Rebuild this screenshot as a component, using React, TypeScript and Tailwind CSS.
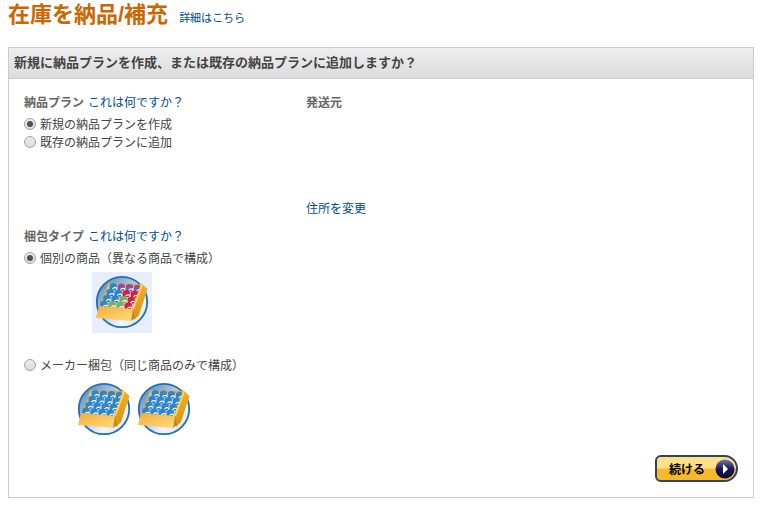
import React from "react";

const BLUE = "#2f86c6";
const PURPLE = "#8a4bab";
const RED = "#d2213f";
const GREEN = "#83ad5c";

const MIXED = [
  [BLUE, PURPLE, PURPLE, PURPLE],
  [BLUE, BLUE, RED, RED],
  [BLUE, BLUE, GREEN, RED],
  [BLUE, GREEN, GREEN, RED],
];
const SAME = [0, 1, 2, 3].map(() => [BLUE, BLUE, BLUE, BLUE]);

function BoxIcon({ id, items }: { id: string; items: string[][] }) {
  return (
    <svg viewBox="0 0 60 60" className="size-[60px]" aria-hidden="true">
      <defs>
        <linearGradient id={id + "sky"} x1="0" y1="0" x2="1" y2="1">
          <stop offset="0" stopColor="#3f7dbb" />
          <stop offset="0.35" stopColor="#9dbce0" />
          <stop offset="0.7" stopColor="#f0f6fd" />
          <stop offset="1" stopColor="#c5def2" />
        </linearGradient>
        <linearGradient id={id + "front"} x1="0" y1="0" x2="1" y2="1">
          <stop offset="0" stopColor="#f3ac38" />
          <stop offset="1" stopColor="#ffdd7d" />
        </linearGradient>
        <linearGradient id={id + "side"} x1="0" y1="0" x2="0" y2="1">
          <stop offset="0" stopColor="#f0b02c" />
          <stop offset="1" stopColor="#d99412" />
        </linearGradient>
      </defs>
      <circle cx="30" cy="30" r="25.2" fill={`url(#${id}sky)`} stroke="#2470ad" strokeWidth="1.8" />
      <path d="M16 11 L50 12 L41 38 L7 35Z" fill="#e5a52d" />
      <path d="M17 12 L49 15 L40 38 L9 35Z" fill="#b9d2ea" />
      {items.map((row, r) =>
        row.map((color, c) => (
          <g key={`${r}-${c}`} transform={`translate(${17.6 - r * 3.1 + c * 8.1} ${11 + r * 5.9 + c * 0.6})`}>
            <path d="M0 1.6 Q3.6 -1.8 7.2 1.6 V7 H0Z" fill={color} />
            <path d="M2.6 5.4 Q5 3.4 7.2 4.4 V6.8 H6.4 V5.4 Q4.6 5 2.6 6.6Z" fill="#fff" />
          </g>
        )),
      )}
      <path d="M49 11 L55.5 17 L47 43 L42 48 L40 38Z" fill={`url(#${id}side)`} />
      <path d="M49 11 L50.5 14 L42 37 L40.5 37 L47.8 16Z" fill="#ffd65f" />
      <path d="M4 46 L7 34 L41 37 L39 49Z" fill={`url(#${id}front)`} />
      <path d="M41 37 L43 46 L39 49Z" fill="#c98812" />
    </svg>
  );
}

function Choice({ name, id, label, checked }: { name: string; id: string; label: string; checked?: boolean }) {
  return (
    <div className="flex h-[18px] items-center gap-1">
      <input
        type="radio"
        id={id}
        name={name}
        defaultChecked={checked}
        className="grid size-3 shrink-0 appearance-none place-items-center rounded-full border border-[#a3a3a3] bg-linear-to-b from-[#ececec] to-[#dcdcdc] before:size-1.5 before:rounded-full before:content-[''] checked:before:bg-[#505050]"
      />
      <label htmlFor={id}>{label}</label>
    </div>
  );
}

function Title({ text }: { text: string }) {
  return (
    <div className="mb-1 flex gap-1">
      <h3 className="font-bold text-[#666]">{text}</h3>
      <a href="#help" className="text-[#004b91]">これは何ですか？</a>
    </div>
  );
}

export default function App() {
  return (
    <main className="pr-[9px] pb-2 pl-2 font-['Noto_Sans_CJK_JP','Liberation_Sans',sans-serif] text-xs leading-[18px] text-[#444]">
      <header className="flex h-7 items-baseline gap-[11px]">
        <h1 className="font-['Liberation_Sans','Noto_Sans_CJK_JP',sans-serif] text-[22px] leading-[30px] font-bold text-[#cc6600]">
          在庫を納品/補充
        </h1>
        <a href="#details" className="text-[11px] text-[#004b91]">詳細はこちら</a>
      </header>

      <section className="mt-[19px] border border-[#ccc]">
        <h2 className="border-b border-[#ccc] bg-linear-to-b from-[#eee] to-[#dcdcdc] px-[5px] pt-[5px] pb-[7px] text-[13px] font-bold text-[#444]">
          新規に納品プランを作成、または既存の納品プランに追加しますか？
        </h2>
        <form className="px-[15px] pt-3.5 pb-[15px]" onSubmit={(e) => e.preventDefault()}>
          <div className="grid grid-cols-[282px_1fr]">
            <div>
              <Title text="納品プラン" />
              <Choice name="plan" id="plan-new" label="新規の納品プランを作成" checked />
              <Choice name="plan" id="plan-existing" label="既存の納品プランに追加" />
            </div>
            <div>
              <h3 className="font-bold text-[#666]">発送元</h3>
              <a href="#address" className="mt-[88px] block w-fit text-[#004b91]">住所を変更</a>
            </div>
          </div>

          <div className="mt-2.5">
            <Title text="梱包タイプ" />
            <Choice name="packing" id="packing-mixed" label="個別の商品（異なる商品で構成）" checked />
            <div className="mt-[5px] ml-[68px] h-[61px] w-[60px] bg-[#e6eeff]">
              <BoxIcon id="mixed" items={MIXED} />
            </div>
            <div className="mt-[23px]">
              <Choice name="packing" id="packing-same" label="メーカー梱包（同じ商品のみで構成）" />
            </div>
            <div className="mt-[5px] ml-[50px] flex">
              <BoxIcon id="first" items={SAME} />
              <BoxIcon id="second" items={SAME} />
            </div>
          </div>

          <div className="mt-4 flex justify-end">
            <button
              type="submit"
              className="flex h-[27px] w-[83px] items-center justify-between rounded-l-md rounded-r-[14px] border-2 border-[#2d4568] bg-linear-to-b from-[#ffe08a] from-45% to-[#f5b92b] to-55% pr-px pl-3 font-bold text-black"
            >
              続ける
              <svg viewBox="0 0 20 20" className="size-5" aria-hidden="true">
                <defs>
                  <linearGradient id="orb" x1="0" y1="0" x2="0" y2="1">
                    <stop offset="0" stopColor="#7678a4" />
                    <stop offset="0.5" stopColor="#171757" />
                    <stop offset="1" stopColor="#04043d" />
                  </linearGradient>
                </defs>
                <circle cx="10" cy="10" r="9.5" fill="url(#orb)" />
                <path d="M8 5 L13 10 L8 15Z" fill="#fff" />
              </svg>
            </button>
          </div>
        </form>
      </section>
    </main>
  );
}
